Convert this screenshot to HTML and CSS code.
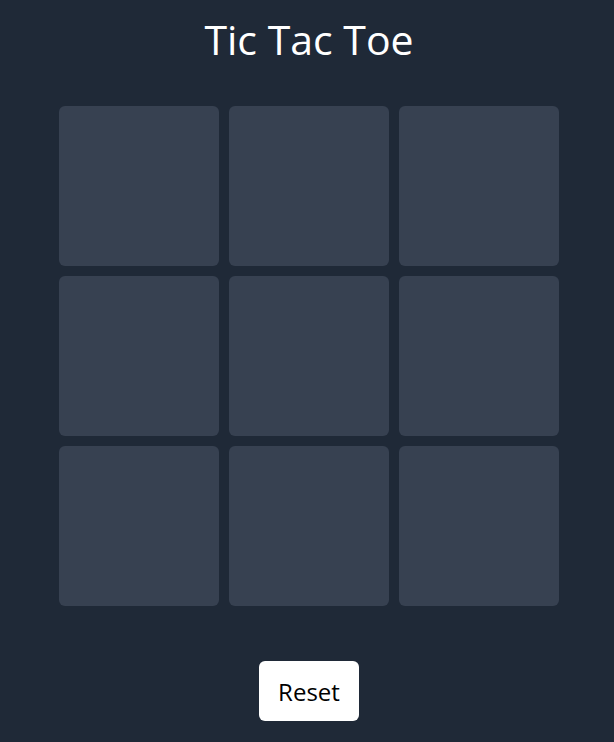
FILE: index.html
```html
<!DOCTYPE html>
<html lang="en">
<head>
<meta charset="utf-8">
<title>Tic Tac Toe</title>
<link rel="stylesheet" href="styles.css">
</head>
<body>
<main class="game">
  <h1 class="title">Tic Tac Toe</h1>
  <div class="board">
    <button class="cell" aria-label="cell 1"></button>
    <button class="cell" aria-label="cell 2"></button>
    <button class="cell" aria-label="cell 3"></button>
    <button class="cell" aria-label="cell 4"></button>
    <button class="cell" aria-label="cell 5"></button>
    <button class="cell" aria-label="cell 6"></button>
    <button class="cell" aria-label="cell 7"></button>
    <button class="cell" aria-label="cell 8"></button>
    <button class="cell" aria-label="cell 9"></button>
  </div>
  <button class="reset">Reset</button>
</main>
</body>
</html>
```

FILE: styles.css
```css
html, body {
  margin: 0;
  padding: 0;
  background: #1f2937;
  height: 100%;
}
body {
  font-family: "Open Sans", "Noto Sans", sans-serif;
  color: #ffffff;
}
.game {
  display: flex;
  flex-direction: column;
  align-items: center;
  padding-left: 4px;
}
.title {
  margin: 13px 0 41px;
  font-size: 41px;
  line-height: 52px;
  font-weight: 400;
  color: #ffffff;
}
.board {
  display: grid;
  grid-template-columns: repeat(3, 160px);
  grid-auto-rows: 160px;
  gap: 10px;
}
.cell {
  border: none;
  margin: 0;
  padding: 0;
  background: #374151;
  border-radius: 6px;
}
.reset {
  margin-top: 55px;
  width: 100px;
  height: 60px;
  border: none;
  border-radius: 6px;
  background: #ffffff;
  color: #000000;
  font-family: "Open Sans", "Noto Sans", sans-serif;
  font-size: 24px;
  line-height: 32px;
  padding: 2px 0 0;
  display: flex;
  align-items: center;
  justify-content: center;
}
```
